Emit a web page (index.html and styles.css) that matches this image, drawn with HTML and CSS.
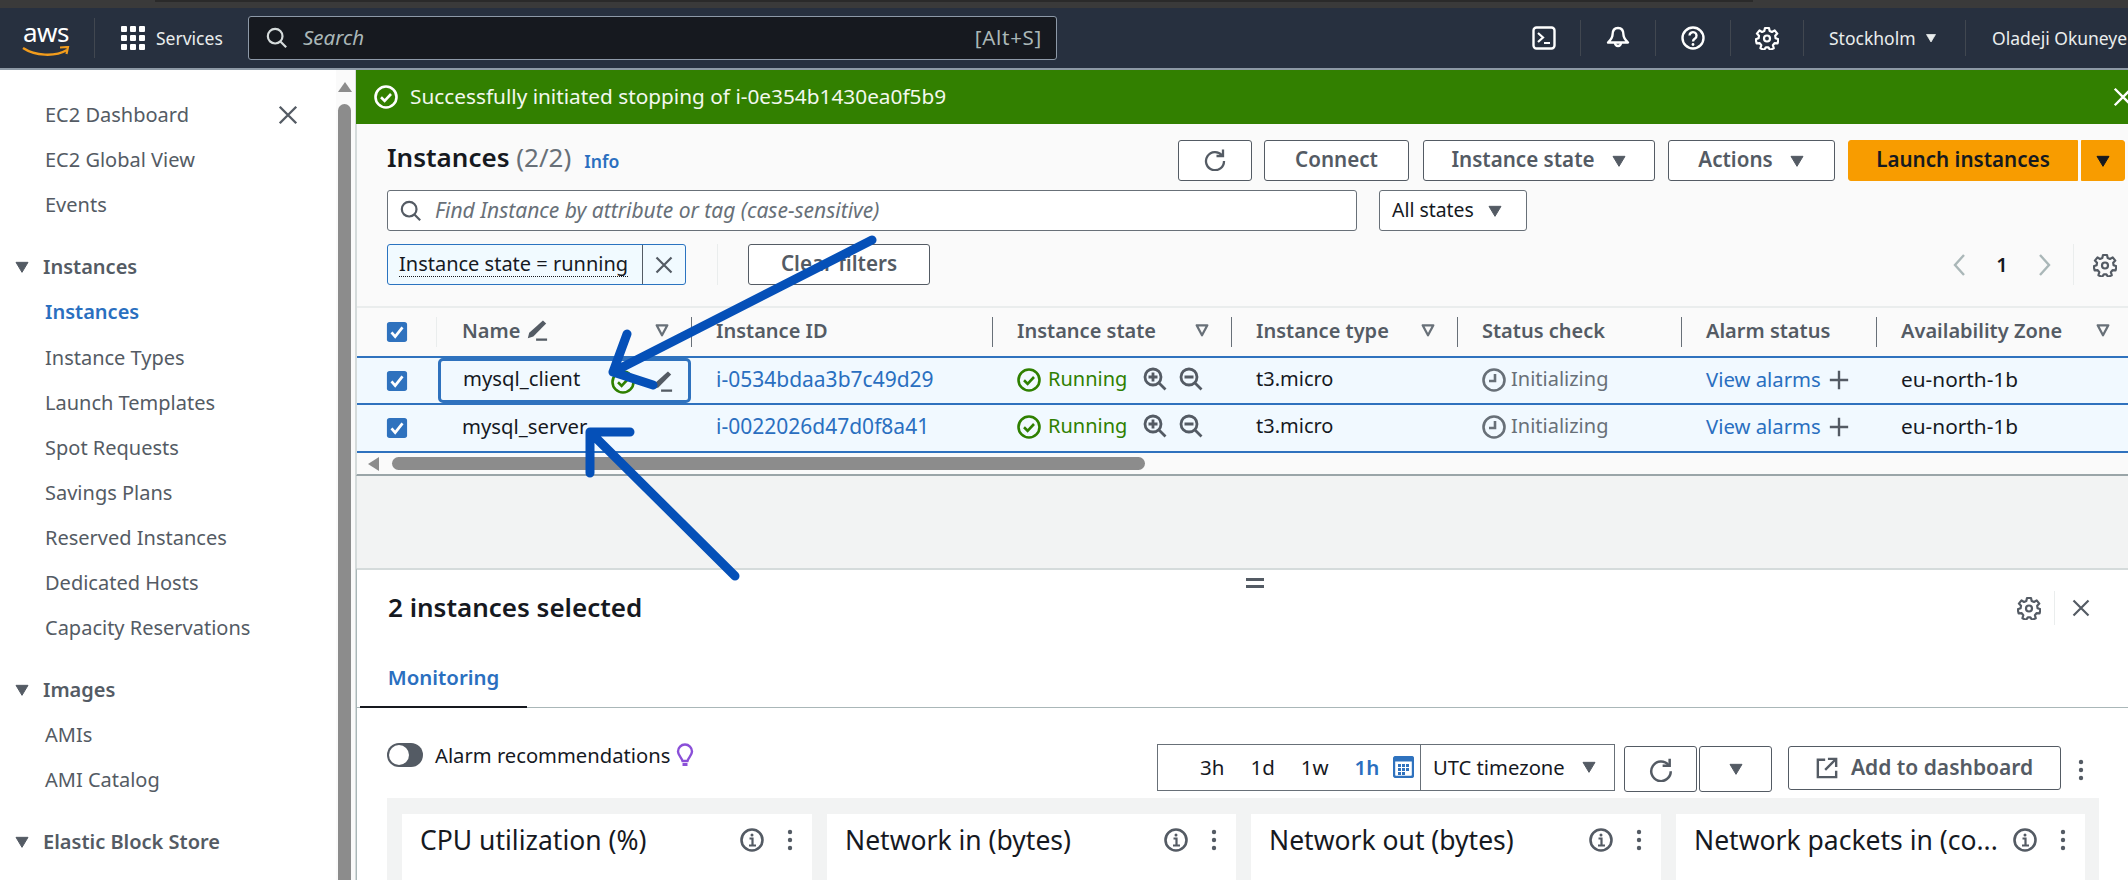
FILE: index.html
```html
<!DOCTYPE html>
<html lang="en">
<head>
<meta charset="utf-8">
<title>Instances | EC2</title>
<link rel="stylesheet" href="styles.css">
</head>
<body>
<svg class="defs" aria-hidden="true">
  <symbol id="search" viewBox="0 0 24 24"><circle cx="10" cy="10" r="8" fill="none" stroke="currentColor" stroke-width="2.4"/><path d="M16 16l6 6" stroke="currentColor" stroke-width="2.4" fill="none"/></symbol>
  <symbol id="close" viewBox="0 0 24 24"><path d="M3 3l18 18M21 3L3 21" stroke="currentColor" stroke-width="2.6" fill="none"/></symbol>
  <symbol id="caret" viewBox="0 0 24 24"><path d="M3 5h18L12 20z" fill="currentColor" stroke="currentColor" stroke-width="1.5" stroke-linejoin="round"/></symbol>
  <symbol id="sort" viewBox="0 0 24 24"><path d="M4 5h16l-8 15z" fill="none" stroke="currentColor" stroke-width="3.4" stroke-linejoin="round"/></symbol>
  <symbol id="gear" viewBox="0 0 24 24"><path d="M10 2h4l.7 3 2.3 1 2.7-1.6 2.6 3.2-2.1 2.2.4 2.4 2.9 1.1-.9 4-3.1-.1-1.6 2 .9 3-3.7 1.7-1.7-2.6h-2.6l-1.7 2.6-3.7-1.7.9-3-1.6-2-3.1.1-.9-4 2.9-1.1.4-2.4-2.1-2.2 2.6-3.2L7 6l2.3-1z" fill="none" stroke="currentColor" stroke-width="2.2" stroke-linejoin="round"/><circle cx="12" cy="12.5" r="3" fill="none" stroke="currentColor" stroke-width="2.2"/></symbol>
  <symbol id="refresh" viewBox="0 0 24 24"><path d="M19 8.500a9 9 0 1 0 2 5.500" fill="none" stroke="currentColor" stroke-width="2.300"/><path d="M20 2.500V9h-6.500" fill="none" stroke="currentColor" stroke-width="2.300"/></symbol>
  <symbol id="ok" viewBox="0 0 24 24"><circle cx="12" cy="12" r="10.500" fill="none" stroke="currentColor" stroke-width="2.600"/><path d="M7 12.300l3.600 3.500L17 9" fill="none" stroke="currentColor" stroke-width="2.600"/></symbol>
  <symbol id="clock" viewBox="0 0 24 24"><circle cx="12" cy="12" r="10.500" fill="none" stroke="currentColor" stroke-width="2.600"/><path d="M13 6v7H7" fill="none" stroke="currentColor" stroke-width="2.600"/></symbol>
  <symbol id="zoomin" viewBox="0 0 24 24"><circle cx="10" cy="10" r="8" fill="none" stroke="currentColor" stroke-width="2.800"/><path d="M16 16l6.500 6.500M10 5.500v9M5.500 10h9" fill="none" stroke="currentColor" stroke-width="2.800"/></symbol>
  <symbol id="zoomout" viewBox="0 0 24 24"><circle cx="10" cy="10" r="8" fill="none" stroke="currentColor" stroke-width="2.800"/><path d="M16 16l6.500 6.500M5.500 10h9" fill="none" stroke="currentColor" stroke-width="2.800"/></symbol>
  <symbol id="pencil" viewBox="0 0 24 24"><path d="M18.500 1.500l3.500 3.500L8 19l-6 2 1.500-6z" fill="currentColor"/><path d="M11 22.500h12" stroke="currentColor" stroke-width="2.500" fill="none"/></symbol>
  <symbol id="plus" viewBox="0 0 24 24"><path d="M12 2v20M2 12h20" stroke="currentColor" stroke-width="2.600" fill="none"/></symbol>
  <symbol id="info" viewBox="0 0 24 24"><circle cx="12" cy="12" r="10.500" fill="none" stroke="currentColor" stroke-width="2.600"/><path d="M9.500 10.500H12.500V17M9 17.500h7" fill="none" stroke="currentColor" stroke-width="2.200"/><circle cx="12" cy="7" r="1.500" fill="currentColor"/></symbol>
  <symbol id="dots" viewBox="0 0 6 24"><circle cx="3" cy="4" r="2.200" fill="currentColor"/><circle cx="3" cy="12" r="2.200" fill="currentColor"/><circle cx="3" cy="20" r="2.200" fill="currentColor"/></symbol>
  <symbol id="check" viewBox="0 0 24 24"><rect x="1" y="1" width="22" height="22" rx="3" fill="#2f72be"/><path d="M6 12.500l4 4.500 8-10" fill="none" stroke="#fff" stroke-width="3"/></symbol>
</svg>

<div class="topstrip"><div class="topstrip-tab"></div></div>

<header class="nav">
  <div class="logo">
    <span class="logo-word">aws</span>
    <svg class="logo-smile" viewBox="0 0 48 12"><path d="M1 2c12 8 32 9 44 2" fill="none" stroke="#f29c1c" stroke-width="2.400"/><path d="M38 1.500l8-.5-1.500 7" fill="none" stroke="#f29c1c" stroke-width="2.200"/></svg>
  </div>
  <div class="services">
    <div class="grid-icon"><i></i><i></i><i></i><i></i><i></i><i></i><i></i><i></i><i></i></div>
    <span>Services</span>
  </div>
  <div class="nav-search">
    <svg class="ic ic-22"><use href="#search"/></svg>
    <span class="nav-search-text">Search</span>
    <span class="nav-search-key">[Alt+S]</span>
  </div>
  <div class="nav-icon nav-first">
    <svg class="ic ic-24" viewBox="0 0 24 24"><rect x="1.500" y="1.500" width="21" height="21" rx="3" fill="none" stroke="currentColor" stroke-width="2.400"/><path d="M6 7l5 4.500L6 16M12 17h6" fill="none" stroke="currentColor" stroke-width="2.200"/></svg>
  </div>
  <div class="nav-icon">
    <svg class="ic ic-24" viewBox="0 0 24 24"><path d="M12 2c4 0 5.500 3 5.500 7 0 3 2 5 4.500 7.500H2C4.500 14 6.500 12 6.500 9c0-4 1.500-7 5.500-7z" fill="none" stroke="currentColor" stroke-width="2.400" stroke-linejoin="round"/><path d="M9 17a3 3 0 0 0 6 0" fill="none" stroke="currentColor" stroke-width="2.400"/></svg>
  </div>
  <div class="nav-icon">
    <svg class="ic ic-24" viewBox="0 0 24 24"><circle cx="12" cy="12" r="10.500" fill="none" stroke="currentColor" stroke-width="2.400"/><path d="M8.500 9.500a3.500 3.500 0 1 1 5.500 3c-1.300.9-2 1.500-2 3" fill="none" stroke="currentColor" stroke-width="2.400"/><circle cx="12" cy="18.500" r="1.400" fill="currentColor"/></svg>
  </div>
  <div class="nav-icon nav-last"><svg class="ic ic-24"><use href="#gear"/></svg></div>
  <div class="nav-region"><span>Stockholm</span><svg class="ic ic-12"><use href="#caret"/></svg></div>
  <div class="nav-user">Oladeji Okuneye</div>
</header>

<div class="shell">
  <aside class="side">
    <nav class="side-nav">
      <div class="side-item side-top"><span>EC2 Dashboard</span><svg class="ic ic-22 side-close"><use href="#close"/></svg></div>
      <div class="side-item">EC2 Global View</div>
      <div class="side-item">Events</div>

      <div class="side-head"><svg class="ic ic-16"><use href="#caret"/></svg>Instances</div>
      <div class="side-item side-active">Instances</div>
      <div class="side-item">Instance Types</div>
      <div class="side-item">Launch Templates</div>
      <div class="side-item">Spot Requests</div>
      <div class="side-item">Savings Plans</div>
      <div class="side-item">Reserved Instances</div>
      <div class="side-item">Dedicated Hosts</div>
      <div class="side-item">Capacity Reservations</div>

      <div class="side-head"><svg class="ic ic-16"><use href="#caret"/></svg>Images</div>
      <div class="side-item">AMIs</div>
      <div class="side-item">AMI Catalog</div>

      <div class="side-head"><svg class="ic ic-16"><use href="#caret"/></svg>Elastic Block Store</div>
    </nav>
    <div class="side-scroll">
      <div class="side-scroll-up"></div>
      <div class="side-scroll-thumb"></div>
    </div>
  </aside>

  <main class="main">
    <div class="banner">
      <svg class="ic ic-24"><use href="#ok"/></svg>
      <span>Successfully initiated stopping of i-0e354b1430ea0f5b9</span>
      <svg class="ic ic-22 banner-close"><use href="#close"/></svg>
    </div>

    <section class="instances">
      <div class="bar bar-title">
        <h1 class="title">Instances <span class="title-count">(2/2)</span></h1>
        <a class="info-link">Info</a>
        <button class="btn btn-refresh"><svg class="ic ic-24"><use href="#refresh"/></svg></button>
        <button class="btn btn-connect">Connect</button>
        <button class="btn btn-state">Instance state<svg class="ic ic-16"><use href="#caret"/></svg></button>
        <button class="btn btn-actions">Actions<svg class="ic ic-16"><use href="#caret"/></svg></button>
        <button class="btn btn-launch">Launch instances</button>
        <button class="btn btn-launch-more"><svg class="ic ic-16"><use href="#caret"/></svg></button>
      </div>

      <div class="bar bar-filter">
        <div class="filter-input">
          <svg class="ic ic-22"><use href="#search"/></svg>
          <span>Find Instance by attribute or tag (case-sensitive)</span>
        </div>
        <button class="select-states">All states<svg class="ic ic-16"><use href="#caret"/></svg></button>
      </div>

      <div class="bar bar-token">
        <div class="token">
          <span class="token-text"><span>Instance state = running</span></span>
          <span class="token-x"><svg class="ic ic-20"><use href="#close"/></svg></span>
        </div>
        <button class="btn btn-clear">Clear filters</button>
        <div class="pager">
          <svg class="pager-arrow" viewBox="0 0 14 24"><path d="M12 2L3 12l9 10" fill="none" stroke="currentColor" stroke-width="2.400"/></svg>
          <span class="pager-num">1</span>
          <svg class="pager-arrow" viewBox="0 0 14 24"><path d="M2 2l9 10-9 10" fill="none" stroke="currentColor" stroke-width="2.400"/></svg>
          <span class="pager-gear"><svg class="ic ic-24"><use href="#gear"/></svg></span>
        </div>
      </div>

      <div class="table">
        <div class="row row-head">
          <div class="cell-check"><svg class="ic ic-22"><use href="#check"/></svg></div>
          <div class="th th-name"><span>Name</span><svg class="ic ic-22 th-pencil"><use href="#pencil"/></svg><svg class="ic ic-16 th-sort"><use href="#sort"/></svg></div>
          <div class="th">Instance ID</div>
          <div class="th"><span>Instance state</span><svg class="ic ic-16 th-sort"><use href="#sort"/></svg></div>
          <div class="th"><span>Instance type</span><svg class="ic ic-16 th-sort"><use href="#sort"/></svg></div>
          <div class="th">Status check</div>
          <div class="th">Alarm status</div>
          <div class="th"><span>Availability Zone</span><svg class="ic ic-16 th-sort th-sort-last"><use href="#sort"/></svg></div>
        </div>

        <div class="row row-data">
          <div class="cell-check"><svg class="ic ic-22"><use href="#check"/></svg></div>
          <div class="td td-name td-focus"><span>mysql_client</span><svg class="ic ic-24 ok-mark"><use href="#ok"/></svg><svg class="ic ic-22 focus-pencil"><use href="#pencil"/></svg></div>
          <div class="td"><a class="link link-id">i-0534bdaa3b7c49d29</a></div>
          <div class="td"><svg class="ic ic-24 ok-mark"><use href="#ok"/></svg><span class="running">Running</span><svg class="ic ic-24 zoom-a"><use href="#zoomin"/></svg><svg class="ic ic-24 zoom-b"><use href="#zoomout"/></svg></div>
          <div class="td">t3.micro</div>
          <div class="td td-status"><svg class="ic ic-24"><use href="#clock"/></svg><span>Initializing</span></div>
          <div class="td"><a class="link">View alarms</a><svg class="ic ic-22 alarm-plus"><use href="#plus"/></svg></div>
          <div class="td td-zone">eu-north-1b</div>
        </div>

        <div class="row row-data row-last">
          <div class="cell-check"><svg class="ic ic-22"><use href="#check"/></svg></div>
          <div class="td td-name"><span>mysql_server</span></div>
          <div class="td"><a class="link link-id">i-0022026d47d0f8a41</a></div>
          <div class="td"><svg class="ic ic-24 ok-mark"><use href="#ok"/></svg><span class="running">Running</span><svg class="ic ic-24 zoom-a"><use href="#zoomin"/></svg><svg class="ic ic-24 zoom-b"><use href="#zoomout"/></svg></div>
          <div class="td">t3.micro</div>
          <div class="td td-status"><svg class="ic ic-24"><use href="#clock"/></svg><span>Initializing</span></div>
          <div class="td"><a class="link">View alarms</a><svg class="ic ic-22 alarm-plus"><use href="#plus"/></svg></div>
          <div class="td td-zone">eu-north-1b</div>
        </div>

        <div class="hscroll">
          <div class="hscroll-left"></div>
          <div class="hscroll-thumb"></div>
        </div>
      </div>
    </section>

    <div class="gap"></div>

    <section class="panel">
      <div class="drag"></div>
      <div class="panel-head">
        <h2 class="panel-title">2 instances selected</h2>
        <svg class="ic ic-24 panel-gear"><use href="#gear"/></svg>
        <span class="panel-close"><svg class="ic ic-20"><use href="#close"/></svg></span>
      </div>
      <div class="tabs"><div class="tab">Monitoring</div></div>

      <div class="mon-bar">
        <div class="toggle"></div>
        <span class="mon-label">Alarm recommendations</span>
        <svg class="bulb" viewBox="0 0 18 24"><path d="M9 1.500a7 7 0 0 1 7 7c0 3.500-3.500 6-4.500 9.500h-5C5.500 14.500 2 12 2 8.500a7 7 0 0 1 7-7z" fill="none" stroke="#8a4fd8" stroke-width="2.400"/><path d="M6.500 21.500h5" stroke="#8a4fd8" stroke-width="3" fill="none"/></svg>

        <div class="timebox">
          <div class="times">
            <span class="time">3h</span>
            <span class="time">1d</span>
            <span class="time">1w</span>
            <span class="time time-on">1h</span>
            <svg class="calendar" viewBox="0 0 21 22"><rect x="1" y="1" width="19" height="20" rx="2" fill="#fff" stroke="#2f72be" stroke-width="2.400"/><path d="M1 3.500h19" stroke="#2f72be" stroke-width="4"/><path d="M5 8h3v3H5zM9 8h3v3H9zM13 8h3v3h-3zM5 12h3v3H5zM9 12h3v3H9zM13 12h3v3h-3zM5 16h3v3H5zM9 16h3v3H9z" fill="#2f72be"/></svg>
          </div>
          <div class="zone"><span>UTC timezone</span><svg class="ic ic-16"><use href="#caret"/></svg></div>
        </div>
        <button class="btn btn-mon-refresh"><svg class="ic ic-26"><use href="#refresh"/></svg></button>
        <button class="btn btn-mon-more"><svg class="ic ic-16"><use href="#caret"/></svg></button>
        <button class="btn btn-dash">
          <svg class="ic ic-22" viewBox="0 0 24 24"><path d="M10 3H2v19h20v-7" fill="none" stroke="currentColor" stroke-width="2.600"/><path d="M10 14L21 3M13 2h9v9" fill="none" stroke="currentColor" stroke-width="2.600"/></svg>
          Add to dashboard
        </button>
        <svg class="ic mon-dots"><use href="#dots"/></svg>
      </div>

      <div class="widgets">
        <div class="card"><span class="card-title">CPU utilization (%)</span><svg class="ic ic-24"><use href="#info"/></svg><svg class="ic card-dots"><use href="#dots"/></svg></div>
        <div class="card"><span class="card-title">Network in (bytes)</span><svg class="ic ic-24"><use href="#info"/></svg><svg class="ic card-dots"><use href="#dots"/></svg></div>
        <div class="card"><span class="card-title">Network out (bytes)</span><svg class="ic ic-24"><use href="#info"/></svg><svg class="ic card-dots"><use href="#dots"/></svg></div>
        <div class="card"><span class="card-title">Network packets in (co...</span><svg class="ic ic-24"><use href="#info"/></svg><svg class="ic card-dots"><use href="#dots"/></svg></div>
      </div>
    </section>
  </main>
</div>

<!-- hand drawn annotation arrows on top of the screenshot -->
<svg class="arrows" viewBox="0 0 2128 880">
  <path d="M872 240L613 372M627 334L613 372L653 385" />
  <path d="M735 576L590 432M630 432H590V473" />
</svg>
</body>
</html>
```

FILE: styles.css
```css
* {box-sizing: border-box;}
html, body {
  margin: 0;
  height: 100%;
  overflow: hidden;
}
body {
  display: flex;
  flex-direction: column;
  position: relative;
  font-family: "Noto Sans", "Liberation Sans", sans-serif;
  font-size: 20px;
  color: #16191f;
  background: #fff;
}
h1, h2 {margin: 0;}
button {
  font-family: inherit;
  font-size: inherit;
  cursor: pointer;
}
.defs {
  position: absolute;
  width: 0;
  height: 0;
}
.ic {
  display: block;
  flex: none;
}
.ic-12 {width: 12px; height: 12px;}
.ic-14 {width: 14px; height: 14px;}
.ic-16 {width: 16px; height: 16px;}
.ic-20 {width: 20px; height: 20px;}
.ic-22 {width: 22px; height: 22px;}
.ic-24 {width: 24px; height: 24px;}
.ic-26 {width: 26px; height: 26px;}

/* top strip + nav */
.topstrip {
  height: 8px;
  flex: none;
  background: #3a3a3a;
  padding: 0 375px 0 155px;
}
.topstrip-tab {
  height: 2px;
  background: #2a2a2a;
}
.nav {
  flex: none;
  height: 62px;
  display: flex;
  align-items: center;
  background: #27303f;
  border-bottom: 2px solid #8d99a5;
  color: #eaeded;
  font-size: 17.5px;
}
.logo {
  width: 95px;
  height: 40px;
  padding-left: 23px;
  border-right: 1px solid #414750;
  flex: none;
}
.logo-word {
  display: block;
  color: #fff;
  font-size: 26px;
  line-height: 28px;
  letter-spacing: -0.5px;
}
.logo-smile {
  display: block;
  width: 48px;
  height: 12px;
  margin-left: -1px;
}
.services {
  display: flex;
  align-items: center;
  gap: 11px;
  width: 153px;
  padding-left: 26px;
  flex: none;
}
.grid-icon {
  display: grid;
  grid-template-columns: repeat(3, 6px);
  grid-auto-rows: 6px;
  gap: 3px;
}
.grid-icon i {
  background: #fff;
  border-radius: 1px;
}
.nav-search {
  width: 809px;
  height: 44px;
  flex: none;
  display: flex;
  align-items: center;
  background: #16191f;
  border: 1px solid #8d99a8;
  border-radius: 3px;
  padding: 0 14px 0 17px;
  color: #d5dbdb;
  font-size: 20.5px;
}
.nav-search-text {
  margin-left: 15px;
  padding-bottom: 2px;
  font-style: italic;
  color: #aab7b8;
}
.nav-search-key {
  margin-left: auto;
  padding-bottom: 2px;
  color: #aab7b8;
  letter-spacing: 0.7px;
}
.nav-icon {
  width: 75px;
  height: 36px;
  flex: none;
  display: flex;
  align-items: center;
  justify-content: center;
  border-right: 1px solid #414750;
  color: #fff;
}
.nav-first {
  width: 49px;
  margin-left: 475px;
  justify-content: flex-start;
}
.nav-last {width: 73px;}
.nav-region {
  width: 162px;
  height: 36px;
  flex: none;
  display: flex;
  align-items: center;
  gap: 9px;
  padding-left: 25px;
  border-right: 1px solid #414750;
}
.nav-user {
  flex: none;
  margin-left: 26px;
  white-space: nowrap;
}

/* layout */
.shell {
  flex: 1;
  min-height: 0;
  display: flex;
}
.side {
  width: 356px;
  flex: none;
  display: flex;
  background: #fff;
  overflow: hidden;
}
.side-nav {
  width: 336px;
  flex: none;
  padding-top: 22px;
  color: #545b64;
}
.side-item {
  height: 45.1px;
  padding-left: 45px;
  display: flex;
  align-items: center;
}
.side-close {
  margin-left: 88px;
}
.side-head {
  height: 45.1px;
  margin-top: 17px;
  padding-left: 14px;
  display: flex;
  align-items: center;
  gap: 13px;
  font-weight: 600;
}
.side-active {
  color: #2a6fc0;
  font-weight: 600;
}
.side-scroll {
  width: 20px;
  background: #fafafa;
  border-right: 1px solid #d5dbdb;
  padding: 12px 4px 0 2px;
}
.side-scroll-up {
  width: 0;
  height: 0;
  margin: 0 auto 12px;
  border-left: 7px solid transparent;
  border-right: 7px solid transparent;
  border-bottom: 10px solid #8c8c8c;
}
.side-scroll-thumb {
  height: 800px;
  background: #8c8c8c;
  border-radius: 7px 7px 0 0;
}

.main {
  flex: 1;
  min-width: 0;
  display: flex;
  flex-direction: column;
}
.banner {
  flex: none;
  height: 54px;
  display: flex;
  align-items: center;
  gap: 12px;
  padding-left: 18px;
  background: #328000;
  color: #fff;
  box-shadow: 0 2px 0 #b5bcbf;
  font-size: 20.8px;
}
.banner span {
  color: #f2f8ee;
  padding-bottom: 3px;
}
.banner-close {margin: 0 -6px 0 auto;}

/* instances list */
.instances {
  flex: none;
  background: #fafafa;
  padding-top: 16px;
  border-left: 1px solid #d5dbdb;
  border-bottom: 2px solid #9aa5a8;
}
.bar {
  display: flex;
  align-items: center;
  padding-left: 30px;
}
.bar-title {
  height: 41px;
  padding-right: 3px;
}
.bar-filter {height: 41px; margin-top: 9px;}
.bar-token {height: 41px; margin-top: 13px;}
.title {
  font-size: 26px;
  font-weight: 600;
  line-height: 34px;
  padding-bottom: 7px;
}
.title-count {
  font-weight: 400;
  color: #687078;
}
.info-link {
  margin-left: 13px;
  font-size: 17.6px;
  font-weight: 600;
  color: #2a6fc0;
}
.btn {
  height: 41px;
  flex: none;
  display: flex;
  align-items: center;
  justify-content: center;
  gap: 16px;
  padding: 0 0 3px;
  border: 1px solid #545b64;
  border-radius: 3px;
  background: #fff;
  color: #545b64;
  font-size: 20.6px;
  font-weight: 600;
}
.btn .ic {margin-top: 3px;}
.btn-refresh {width: 74px; margin-left: auto;}
.btn-refresh .ic {margin-top: 0;}
.btn-connect {width: 145px; margin-left: 12px;}
.btn-state {width: 232px; margin-left: 14px;}
.btn-actions {width: 167px; margin-left: 13px;}
.btn-launch {
  width: 230px;
  margin-left: 13px;
  background: #f89c00;
  border-color: #f89c00;
  border-radius: 3px 0 0 3px;
  color: #16191f;
}
.btn-launch-more {
  width: 44px;
  margin-left: 3px;
  background: #f89c00;
  border-color: #f89c00;
  border-radius: 0 3px 3px 0;
  color: #16191f;
}
.filter-input {
  width: 970px;
  height: 41px;
  flex: none;
  display: flex;
  align-items: center;
  gap: 13px;
  padding-left: 12px;
  background: #fff;
  border: 1px solid #687078;
  border-radius: 3px;
  color: #545b64;
}
.filter-input span {
  font-size: 21px;
  font-style: italic;
  color: #687078;
  padding-bottom: 2px;
}
.select-states {
  width: 148px;
  height: 41px;
  margin-left: 22px;
  display: flex;
  align-items: center;
  gap: 13px;
  padding: 0 0 3px 12px;
  background: #fff;
  border: 1px solid #687078;
  border-radius: 3px;
  color: #16191f;
  font-size: 19.4px;
}
.select-states .ic {color: #545b64; margin-top: 3px;}
.token {
  width: 299px;
  height: 41px;
  flex: none;
  display: flex;
  background: #f1faff;
  border: 1px solid #2a73c0;
  border-radius: 3px;
}
.token-text {
  width: 254px;
  display: flex;
  align-items: center;
  padding-left: 11px;
  white-space: nowrap;
}
.token-text span {
  line-height: 24px;
  border-bottom: 1.500px dotted #16191f;
}
.token-x {
  flex: 1;
  display: flex;
  align-items: center;
  justify-content: center;
  border-left: 1px solid #545b64;
  color: #545b64;
}
.btn-clear {
  width: 182px;
  margin-left: 62px;
  position: relative;
}
.btn-clear::before {
  content: "";
  position: absolute;
  left: -32px;
  top: -1px;
  height: 41px;
  border-left: 1px solid #eaeded;
}
.pager {
  margin-left: auto;
  height: 41px;
  display: flex;
  align-items: center;
  color: #16191f;
  font-weight: 600;
}
.pager-arrow {
  width: 16px;
  height: 24px;
  color: #aab7b8;
  flex: none;
}
.pager-num {
  width: 70px;
  text-align: center;
}
.pager-gear {
  margin-left: 20px;
  height: 41px;
  padding: 0 11px 0 19px;
  display: flex;
  align-items: center;
  border-left: 1px solid #eaeded;
  color: #545b64;
}

/* table */
.table {margin-top: 21px;}
.row {
  display: grid;
  grid-template-columns: 79px 255px 301px 239px 226px 224px 195px 252px;
  align-items: center;
}
.row-head {
  height: 50px;
  border-top: 2px solid #eaeded;
}
.row-data {
  height: 47px;
  background: #f1f9ff;
  border-top: 2px solid #2f72be;
}
.row-last {
  height: 50px;
  border-bottom: 2px solid #2f72be;
  padding-bottom: 1px;
}
.cell-check {padding-left: 29px;}
.th {
  height: 30px;
  display: flex;
  align-items: center;
  padding: 0 0 4px 24px;
  border-left: 1px solid #687078;
  color: #545b64;
  font-weight: 600;
}
.th-name {
  border-left-color: #eaeded;
  padding-left: 25px;
}
.th-pencil {margin-left: 6px; color: #545b64;}
.th-sort {
  margin-left: auto;
  margin-right: 21px;
  color: #687078;
}
.th-sort-last {margin-right: 17px;}
.td {
  display: flex;
  align-items: center;
  height: 100%;
  padding-left: 25px;
  padding-bottom: 4px;
  white-space: nowrap;
}
.td-name {padding-left: 26px; font-size: 20.3px;}
.td-zone {font-size: 20.8px;}
.td-focus {
  height: 45px;
  margin-left: 2px;
  padding-left: 22px;
  padding-bottom: 0;
  background: #f1f9ff;
  border: 3px solid #2f72be;
  border-radius: 5px;
}
.td-focus span {padding-bottom: 5px;}
.td-focus .ok-mark {margin-left: auto;}
.focus-pencil {margin: 0 15px 0 16px; color: #545b64;}
.ok-mark {color: #2f8000; margin-top: 2px;}
.link {color: #2a6fc0; font-size: 20.3px;}
.link-id {font-size: 21px;}
.running {
  margin-left: 7px;
  color: #2f8000;
}
.zoom-a {margin-left: 16px; color: #545b64;}
.zoom-b {margin-left: 12px; color: #545b64;}
.td-status {color: #687078;}
.td-status span {margin-left: 5px;}
.td-status .ic {margin-top: 2px;}
.alarm-plus {margin-left: 7px; color: #545b64; margin-top: 2px;}
.hscroll {
  height: 21px;
  display: flex;
  align-items: center;
  padding-left: 11px;
  background: #fafafa;
}
.hscroll-left {
  width: 0;
  height: 0;
  border-top: 7px solid transparent;
  border-bottom: 7px solid transparent;
  border-right: 11px solid #8c8c8c;
}
.hscroll-thumb {
  width: 753px;
  height: 13px;
  margin-left: 13px;
  background: #8c8c8c;
  border-radius: 7px;
}
.gap {
  flex: none;
  height: 92px;
  background: #f2f3f3;
  border-left: 1px solid #d5dbdb;
}

/* bottom panel */
.panel {
  flex: 1;
  min-height: 0;
  position: relative;
  background: #fff;
  border-top: 2px solid #d5dbdb;
  border-left: 1px solid #aab7b8;
  overflow: hidden;
}
.drag {
  position: absolute;
  left: 889px;
  top: 8px;
  width: 18px;
  height: 10px;
  border-top: 3px solid #545b64;
  border-bottom: 3px solid #545b64;
}
.panel-head {
  height: 76px;
  display: flex;
  align-items: center;
  padding-left: 31px;
}
.panel-title {
  font-size: 26px;
  font-weight: 600;
  padding-bottom: 3px;
}
.panel-gear {
  margin-left: auto;
  color: #545b64;
}
.panel-close {
  height: 34px;
  margin: 0 37px 0 13px;
  padding-left: 16px;
  display: flex;
  align-items: center;
  border-left: 1px solid #eaeded;
  color: #545b64;
}
.tabs {
  height: 62px;
  display: flex;
  align-items: flex-end;
  padding-left: 3px;
  border-bottom: 1px solid #aab7b8;
}
.tab {
  width: 167px;
  height: 45px;
  margin-bottom: -1px;
  text-align: center;
  color: #2a6fc0;
  font-size: 20.4px;
  font-weight: 600;
  border-bottom: 2px solid #16191f;
}
.mon-bar {
  height: 48px;
  margin-top: 36px;
  display: flex;
  align-items: flex-start;
  padding-left: 30px;
}
.toggle {
  width: 36px;
  height: 24px;
  margin-top: -1px;
  flex: none;
  background: #545b64;
  border-radius: 12px;
  position: relative;
}
.toggle::before {
  content: "";
  position: absolute;
  left: 2px;
  top: 2px;
  width: 20px;
  height: 20px;
  background: #fff;
  border-radius: 50%;
}
.mon-label {
  margin: -3px 0 0 12px;
  font-size: 20.2px;
  white-space: nowrap;
}
.bulb {
  width: 18px;
  height: 24px;
  margin: -1px 0 0 6px;
  flex: none;
}
.timebox {
  width: 458px;
  height: 47px;
  margin-left: auto;
  flex: none;
  display: flex;
  border: 1px solid #687078;
}
.times {
  width: 263px;
  display: flex;
  align-items: center;
  padding: 0 0 2px 42px;
  border-right: 1px solid #687078;
  font-size: 20.5px;
}
.time {margin-right: 26px;}
.time-on {
  margin-right: 14px;
  color: #2a6fc0;
  font-weight: 600;
}
.calendar {
  width: 21px;
  height: 22px;
  flex: none;
}
.zone {
  flex: 1;
  display: flex;
  align-items: center;
  gap: 16px;
  padding: 0 0 2px 12px;
  font-size: 20.2px;
  white-space: nowrap;
}
.zone .ic {color: #545b64;}
.btn-mon-refresh {
  width: 73px;
  height: 46px;
  margin: 2px 0 0 9px;
}
.btn-mon-more {
  width: 73px;
  height: 46px;
  margin: 2px 0 0 2px;
}
.btn-dash {
  width: 273px;
  height: 44px;
  margin: 2px 0 0 16px;
  gap: 13px;
  font-size: 21px;
}
.mon-dots {
  width: 6px;
  height: 24px;
  margin: 14px 44px 0 17px;
  color: #545b64;
}
.widgets {
  height: 90px;
  margin: 6px 29px 0 30px;
  padding: 16px 15px 0;
  background: #f2f3f3;
  display: grid;
  grid-template-columns: 410px 409px 410px 409px;
  gap: 15px;
}
.card {
  background: #fff;
  display: flex;
  align-items: flex-start;
  padding: 8px 19px 0 18px;
  color: #545b64;
}
.card-title {
  flex: 1;
  font-size: 26.5px;
  line-height: 36px;
  color: #16191f;
  white-space: nowrap;
  min-width: 0;
}
.card .ic-24 {margin-top: 6px;}
.card-dots {
  width: 6px;
  height: 24px;
  margin: 6px 0 0 23px;
}

/* annotation layer */
.arrows {
  position: absolute;
  left: 0;
  top: 0;
  width: 2128px;
  height: 880px;
  pointer-events: none;
}
.arrows path {
  fill: none;
  stroke: #0550b8;
  stroke-width: 9;
  stroke-linecap: round;
  stroke-linejoin: round;
}
```
